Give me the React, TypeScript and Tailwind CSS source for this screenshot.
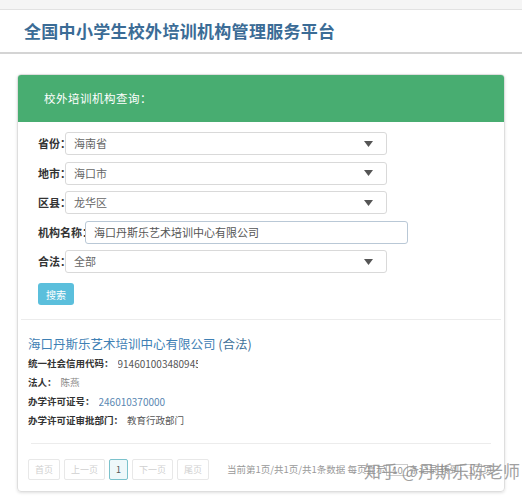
const FONT = { fontFamily: '"Noto Sans CJK SC", "Noto Sans", sans-serif' };

function Caret() {
  return (
    <svg width="9" height="6" viewBox="0 0 9 6" className="shrink-0">
      <path d="M0 0 L9 0 L4.5 6 Z" fill="#555" />
    </svg>
  );
}

function SelectRow({ label, value }: { label: string; value: string }) {
  return (
    <div className="flex items-center h-[23px]">
      <span className="text-[11px] font-bold text-[#333] w-[27px] whitespace-nowrap">{label}</span>
      <div className="w-[322px] h-[23px] border border-[#d9d9d9] rounded-[3px] flex items-center justify-between pl-[8px] pr-[13px] bg-white">
        <span className="text-[11px] text-[#666]">{value}</span>
        <Caret />
      </div>
    </div>
  );
}

function PageBtn({ label, active }: { label: string; active?: boolean }) {
  return (
    <div
      className={`shrink-0 whitespace-nowrap h-[21px] px-[6px] flex items-center justify-center rounded-[2px] text-[9px] ${
        active ? 'border border-[#7cc2cc] bg-[#eef8fa] text-[#555]' : 'border border-[#e8e8e8] text-[#d0d0d0]'
      }`}
    >
      {label}
    </div>
  );
}

export default function App() {
  return (
    <div className="w-[522px] h-[500px] bg-white relative overflow-hidden" style={FONT}>
      <div className="h-[10px] bg-[#f5f5f5] border-b border-[#e2e2e2]" />
      <header className="h-[44px] flex items-center pl-[24px] border-b-2 border-[#d4d4d4] bg-white">
        <h1 className="text-[17px] font-bold text-[#3b6c96] tracking-[0.3px]">全国中小学生校外培训机构管理服务平台</h1>
      </header>

      <div className="mx-[17px] mt-[20px] border border-[#dedede] rounded-[4px] shadow-[0_1px_3px_rgba(0,0,0,0.12)] h-[418px] flex flex-col">
        <div className="h-[47px] bg-[#48ad71] rounded-t-[3px] flex items-center pl-[26px]">
          <span className="text-[11.5px] text-white tracking-[0.5px]">校外培训机构查询：</span>
        </div>

        <div className="px-[20px] pt-[10px] flex flex-col gap-[6.5px]">
          <SelectRow label="省份：" value="海南省" />
          <SelectRow label="地市：" value="海口市" />
          <SelectRow label="区县：" value="龙华区" />
          <div className="flex items-center h-[23px]">
            <span className="text-[11px] font-bold text-[#333] w-[47px] whitespace-nowrap">机构名称：</span>
            <div className="w-[323px] h-[23px] border border-[#b9c8d6] rounded-[3px] flex items-center pl-[8px] bg-white">
              <span className="text-[11px] text-[#555]">海口丹斯乐艺术培训中心有限公司</span>
            </div>
          </div>
          <SelectRow label="合法：" value="全部" />
          <div>
            <button className="w-[36px] h-[22px] bg-[#5bbfdc] rounded-[3px] text-[10px] text-white">搜索</button>
          </div>
        </div>

        <div className="mx-[3px] mt-[14px] border-t border-[#ececec]" />

        <div className="px-[10px] pt-[15px]">
          <div className="text-[12.5px] text-[#3e80b4] leading-[18px]">
            海口丹斯乐艺术培训中心有限公司 <span className="text-[#3e6f98]">(合法)</span>
          </div>
          <div className="mt-[1px] flex flex-col text-[9.5px] leading-[19px]">
            <div className="flex">
              <span className="font-bold text-[#333]">统一社会信用代码：</span>
              <span className="ml-[4px] text-[#555] text-[10px] w-[80px] overflow-hidden whitespace-nowrap">914601003480945</span>
            </div>
            <div className="flex">
              <span className="font-bold text-[#333]">法人：</span>
              <span className="ml-[4px] text-[#888]">陈燕</span>
            </div>
            <div className="flex">
              <span className="font-bold text-[#333]">办学许可证号：</span>
              <span className="ml-[4px] text-[#5a87b2] text-[10px] w-[68px] overflow-hidden whitespace-nowrap">246010370000</span>
            </div>
            <div className="flex">
              <span className="font-bold text-[#333]">办学许可证审批部门：</span>
              <span className="ml-[4px] text-[#555]">教育行政部门</span>
            </div>
          </div>
        </div>

        <div className="mx-[13px] mt-[13px] border-t border-[#ececec]" />

        <div className="px-[10px] pt-[15px] flex items-center">
          <div className="flex gap-[4px] shrink-0">
            <PageBtn label="首页" />
            <PageBtn label="上一页" />
            <PageBtn label="1" active />
            <PageBtn label="下一页" />
            <PageBtn label="尾页" />
          </div>
          <div className="ml-[18px] flex items-center text-[9.5px] text-[#999] whitespace-nowrap">
            当前第1页/共1页/共1条数据 每页显示
            <span className="inline-block w-[22px] h-[12px] border border-[#ccc] mx-[1px] text-center leading-[10px]">10</span>
            条记录 转到
            <span className="inline-block w-[22px] h-[12px] border border-[#ccc] mx-[1px] text-center leading-[10px]">1</span>
            页
          </div>
        </div>
      </div>

      <div className="absolute left-[364px] top-[458px] text-[17px] text-[#8a8a8a] opacity-80 whitespace-nowrap">
        知乎 @丹斯乐陈老师
      </div>
    </div>
  );
}
